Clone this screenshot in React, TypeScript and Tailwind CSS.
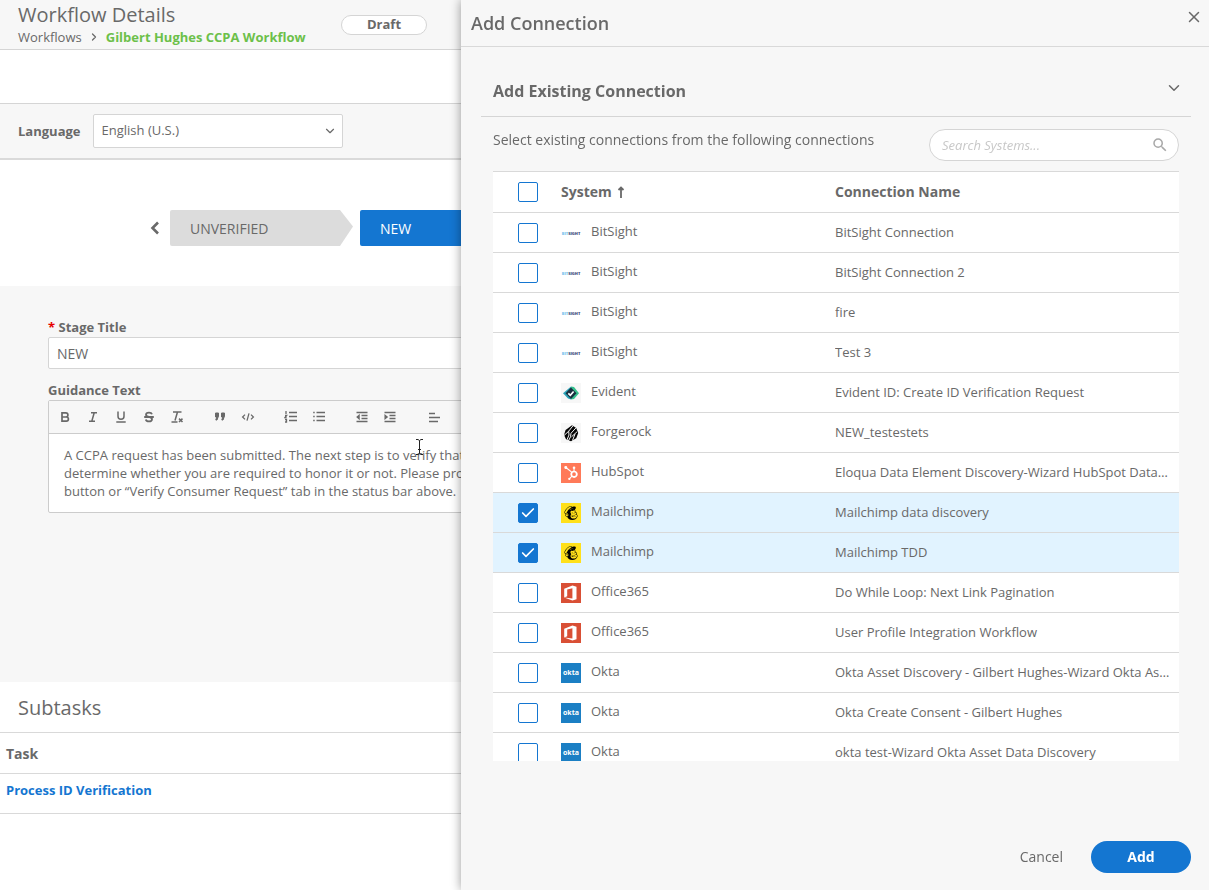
import { useState } from 'react';
import type { ReactNode } from 'react';
import { ChevronDown, ChevronRight, X, Check } from 'lucide-react';
import { SiHubspot, SiMailchimp } from 'react-icons/si';
import { MdSearch } from 'react-icons/md';

type System = 'BitSight' | 'Evident' | 'Forgerock' | 'HubSpot' | 'Mailchimp' | 'Office365' | 'Okta';

const connections: { system: System; name: string }[] = [
  { system: 'BitSight', name: 'BitSight Connection' },
  { system: 'BitSight', name: 'BitSight Connection 2' },
  { system: 'BitSight', name: 'fire' },
  { system: 'BitSight', name: 'Test 3' },
  { system: 'Evident', name: 'Evident ID: Create ID Verification Request' },
  { system: 'Forgerock', name: 'NEW_testestets' },
  { system: 'HubSpot', name: 'Eloqua Data Element Discovery-Wizard HubSpot Database' },
  { system: 'Mailchimp', name: 'Mailchimp data discovery' },
  { system: 'Mailchimp', name: 'Mailchimp TDD' },
  { system: 'Office365', name: 'Do While Loop: Next Link Pagination' },
  { system: 'Office365', name: 'User Profile Integration Workflow' },
  { system: 'Okta', name: 'Okta Asset Discovery - Gilbert Hughes-Wizard Okta Asset Data' },
  { system: 'Okta', name: 'Okta Create Consent - Gilbert Hughes' },
  { system: 'Okta', name: 'okta test-Wizard Okta Asset Data Discovery' },
];

const logos: Record<System, ReactNode> = {
  BitSight: (
    <svg viewBox="0 0 20 20" className="size-5 overflow-visible" fontFamily="Open Sans, sans-serif" fontWeight="800" fontSize="5">
      <text x="10" y="12" fill="#3b4a78" fontSize="4" textAnchor="middle">
        <tspan fill="#7cc4ee">BIT</tspan>SIGHT
      </text>
    </svg>
  ),
  Evident: (
    <svg viewBox="0 0 20 20" className="size-5 bg-[#f7f7f7]">
      <path d="M10 3.500 2 10.300 7 15.500l3 1z" fill="#2aa3b8" />
      <path d="M10 3.500l3 .5 5 6.300-5 5.700-3 .5z" fill="#35c08d" />
      <path d="M10 4.500l5.500 5.800L10 16l-5.500-5.700z" fill="#18303f" />
      <path d="M7.300 10.300l2 1.900 3.300-3.700" fill="none" stroke="#fff" strokeWidth="1.700" />
    </svg>
  ),
  Forgerock: (
    <svg viewBox="0 0 20 20" className="size-5 bg-[#f7f7f7]">
      <path d="M11 2.300 4.600 7 3 12l2.200 4.500L10 18.300l5.200-3L17.200 10l-2-5z" fill="#050505" />
      <path d="M12.200 2.500 7.700 8.200 3 12.500M7.700 8.200 8 12l-2.300 5.500M15.300 4.500 10 10.300l-.5 3.500-2.300 4.500M10.500 13.800l5.500-5M14 11l-2.500 6.500" fill="none" stroke="#f7f7f7" strokeWidth="1" />
    </svg>
  ),
  HubSpot: (
    <span className="grid size-5 place-items-center bg-[#ff7a59]">
      <SiHubspot className="size-3.5 text-white" />
    </span>
  ),
  Mailchimp: (
    <span className="grid size-5 place-items-center bg-[#ffe01b]">
      <SiMailchimp className="size-3.5 text-black" />
    </span>
  ),
  Office365: (
    <svg viewBox="0 0 20 20" className="size-5 bg-[#d94f35]">
      <path d="M3.200 5.800 11.400 2.500 15.500 3.800v12.400L11.400 17.600 3.200 14.600l8.200 1V5.200L6.200 6.500v6.700l-3 1.400z" fill="#fff" />
    </svg>
  ),
  Okta: (
    <svg viewBox="0 0 20 20" className="size-5 bg-[#1b7fc4]">
      <text x="10" y="12" fill="#fff" fontFamily="Open Sans, sans-serif" fontWeight="700" fontSize="7" textAnchor="middle">okta</text>
    </svg>
  ),
};

const toolGroups: { label: string; icon: ReactNode }[][] = [
  [
    { label: 'Bold', icon: <path d="M4 2.800h3.800a2.100 2.100 0 010 4.200H4zm0 4.200h4.300a2.100 2.100 0 010 4.200H4z" strokeWidth="1.700" /> },
    { label: 'Italic', icon: <path d="M5 2.700h6M3 11.300h6M8.200 2.700 5.800 11.300" /> },
    { label: 'Underline', icon: <path d="M4 1.500v4.700a3 3 0 006 0V1.500M2.300 12h9.400" /> },
    { label: 'Strike', icon: <path d="M10 4.300C9.600 3.100 8.500 2.600 7 2.600c-1.800 0-3 .8-3 2.100 0 3 6 1.500 6 4.500 0 1.400-1.300 2.200-3 2.200-1.600 0-2.800-.6-3.200-2M2.200 7h9.600" strokeWidth="1.800" /> },
    { label: 'Clear formatting', icon: <path d="M3 2h8.500M7.500 2 5 10.500M1.500 12h6M9 8.600l3.500 3.400M12.500 8.600 9 12" /> },
  ],
  [
    { label: 'Quote', icon: <path d="M2.500 3h3v3L4 10H2.800l1-3H2.500zM8.500 3h3v3L10 10H8.800l1-3H8.500z" fill="currentColor" strokeWidth="1" /> },
    { label: 'Code', icon: <path d="M4 4.600 1.600 7 4 9.400M10 4.600 12.400 7 10 9.400M8 3.300 6 10.700" strokeWidth="1.300" /> },
  ],
  [
    { label: 'Numbered list', icon: <path d="M5 2.500h8M5 6.500h8M5 10.500h8M2 1v3M1 5.500h1.600L1 7.500h1.600M1 9.500h1.500V12H1" strokeWidth="1.300" /> },
    { label: 'Bulleted list', icon: <path d="M4.500 2.500H13M4.500 6.500H13M4.500 10.500H13M1.200 2.500h1.500M1.200 6.500h1.500M1.200 10.500h1.500" /> },
  ],
  [
    { label: 'Outdent', icon: <path d="M1.500 2.500h11M6.500 5.500h6M6.500 8.500h6M1.500 11.500h11M4 5.500 2.300 7 4 8.500z" /> },
    { label: 'Indent', icon: <path d="M1.500 2.500h11M6.500 5.500h6M6.500 8.500h6M1.500 11.500h11M2.200 5.500 4 7 2.200 8.500z" /> },
  ],
  [{ label: 'Align', icon: <path d="M3 3.500h6M3 7.500h11M3 11.500h9" /> }],
];

function Checkbox({ label, checked, onChange }: { label: string; checked: boolean; onChange: () => void }) {
  return (
    <label className="grid size-5 place-items-center">
      <input
        type="checkbox"
        aria-label={label}
        checked={checked}
        onChange={onChange}
        className="peer col-start-1 row-start-1 size-5 appearance-none rounded-xs border border-[#1476d1] bg-white checked:bg-[#1476d1]"
      />
      <Check className="pointer-events-none col-start-1 row-start-1 hidden size-4 text-white peer-checked:block" strokeWidth={2.5} />
    </label>
  );
}

function WorkflowPage() {
  return (
    <div className="min-h-screen">
      <header className="flex h-[50px] items-center border-b border-[#d5d5d5] bg-[#f7f7f7] pl-[18px]">
        <div className="w-[323px]">
          <h1 className="text-xl leading-6">Workflow Details</h1>
          <nav className="flex items-center gap-1.5 leading-5">
            <a href="#workflows">Workflows</a>
            <ChevronRight className="size-3" strokeWidth={2.5} />
            <a href="#workflow" className="font-bold text-[#6cc04a]">Gilbert Hughes CCPA Workflow</a>
          </nav>
        </div>
        <span className="flex h-5 w-[86px] items-center justify-center rounded-full border border-[#d5d5d5] bg-white font-bold">Draft</span>
      </header>

      <div className="h-[54px] border-b border-[#d5d5d5]" />

      <div className="flex h-14 items-center gap-3 border-b-2 border-[#dadada] bg-[#f7f7f7] pl-[18px]">
        <label htmlFor="language" className="pt-0.5 font-bold">Language</label>
        <div className="relative w-[250px]">
          <select id="language" className="h-[34px] w-full appearance-none rounded-xs border border-[#d5d5d5] bg-white px-2">
            <option>English (U.S.)</option>
          </select>
          <ChevronDown className="pointer-events-none absolute top-2.5 right-1.5 size-3.5" />
        </div>
      </div>

      <div className="flex h-[126px] items-center pt-2.5 pl-[149px] text-sm">
        <button aria-label="Previous stage" className="w-[21px]">
          <svg viewBox="0 0 12 14" className="h-3.5 w-3" fill="none" stroke="currentColor" strokeWidth="2.600">
            <path d="M9 1.500 3.500 7 9 12.500" />
          </svg>
        </button>
        <button className="mr-[7px] h-9 w-[183px] rounded-xs bg-[#dcdcdc] pt-0.5 pl-5 text-left [clip-path:polygon(0_0,170px_0,100%_46%,170px_100%,0_100%)]">
          UNVERIFIED
        </button>
        <button className="h-9 w-[183px] rounded-xs bg-[#1476d1] pt-0.5 pl-5 text-left text-white">NEW</button>
      </div>

      <section className="h-[396px] bg-[#f7f7f7] px-12 pt-8">
        <label htmlFor="stage-title" className="block leading-[19px] font-bold">
          <span className="text-[#e60000]">*</span> Stage Title
        </label>
        <input id="stage-title" defaultValue="NEW" className="mb-3 h-8 w-full rounded-xs border border-[#d5d5d5] bg-white px-2 text-sm" />
        <h2 className="leading-[19px] font-bold">Guidance Text</h2>
        <div className="rounded-xs border border-[#cccccc] bg-white">
          <div className="flex h-8 items-center gap-[15px] bg-[#f7f7f7] pl-0.5">
            {toolGroups.map((group, i) => (
              <div key={i} className="flex">
                {group.map((tool) => (
                  <button key={tool.label} aria-label={tool.label} className="grid h-6 w-7 place-items-center">
                    <svg viewBox="0 0 14 14" className="size-3.5" fill="none" stroke="currentColor" strokeWidth="1.500">
                      {tool.icon}
                    </svg>
                  </button>
                ))}
              </div>
            ))}
          </div>
          <div className="h-[79px] overflow-hidden border-t border-[#cccccc] px-[15px] pt-3 leading-[18px] whitespace-nowrap">
            <p>A CCPA request has been submitted. The next step is to verify that</p>
            <p>determine whether you are required to honor it or not. Please proceed</p>
            <p>button or “Verify Consumer Request” tab in the status bar above.</p>
          </div>
        </div>
      </section>

      <h2 className="flex h-[50px] items-center pt-0.5 pl-[18px] text-xl">Subtasks</h2>
      <table className="w-full border-separate border-spacing-0 text-left">
        <thead>
          <tr>
            <th className="h-[42px] border-y border-[#d9d9d9] pt-0.5 pl-1.5 text-sm font-bold">Task</th>
          </tr>
        </thead>
        <tbody>
          <tr>
            <td className="h-10 border-b border-[#d9d9d9] pb-1.5 pl-1.5">
              <a href="#task" className="font-bold text-[#1476d1]">Process ID Verification</a>
            </td>
          </tr>
        </tbody>
      </table>

      {/* text cursor */}
      <svg viewBox="0 0 8 16" className="absolute top-[439px] left-[415px] h-4 w-2" fill="none" stroke="#222">
        <path d="M1 .5h2l1.500 1 1.500-1h2M4.500 1.500v13M1 15.500h2l1.500-1 1.500 1h2M3 10.500h3" />
      </svg>
    </div>
  );
}

function AddConnectionDrawer() {
  const [selected, setSelected] = useState<number[]>([7, 8]);

  const toggle = (index: number) =>
    setSelected((prev) => (prev.includes(index) ? prev.filter((i) => i !== index) : [...prev, index]));

  const allSelected = selected.length === connections.length;

  return (
    <aside className="fixed inset-y-0 right-0 flex w-[748px] max-w-full flex-col bg-[#f7f7f7] shadow-[0_0_10px_rgba(0,0,0,0.4)]">
      <header className="flex h-[47px] shrink-0 justify-between border-b border-[#d9d9d9] pl-2.5">
        <h2 className="text-lg leading-[47px] font-semibold">Add Connection</h2>
        <button aria-label="Close" className="size-[31px] pt-0.5">
          <X className="mx-auto size-[18px]" />
        </button>
      </header>

      <div className="mr-[18px] ml-5 flex h-[70px] shrink-0 items-center justify-between border-b border-[#d5d5d5] pt-[18px] pr-2 pl-3">
        <h3 className="text-base font-bold">Add Existing Connection</h3>
        <button aria-label="Collapse section" className="pb-1.5">
          <ChevronDown className="size-[18px]" />
        </button>
      </div>

      <div className="mr-[30px] ml-8 flex h-[54px] shrink-0 justify-between pt-3">
        <p className="text-sm leading-[22px]">Select existing connections from the following connections</p>
        <div className="relative h-8 w-[250px]">
          <input
            aria-label="Search Systems"
            placeholder="Search Systems..."
            className="h-8 w-full rounded-full border border-[#d5d5d5] bg-white pr-9 pl-3 placeholder:text-[#c8c8c8] placeholder:italic"
          />
          <MdSearch className="absolute top-[7px] right-2.5 size-[18px] text-[#a8a8a8]" />
        </div>
      </div>

      <div className="mr-[30px] ml-8 min-h-0 flex-1 overflow-y-auto [scrollbar-width:none]">
        <table className="w-full table-fixed border-separate border-spacing-0 bg-white text-left">
          <colgroup>
            <col className="w-[68px]" />
            <col className="w-[274px]" />
            <col />
          </colgroup>
          <thead className="text-sm">
            <tr>
              <th className="h-[42px] border-y border-[#d9d9d9] pl-[25px]">
                <Checkbox
                  label="Select all"
                  checked={allSelected}
                  onChange={() => setSelected(allSelected ? [] : connections.map((_, i) => i))}
                />
              </th>
              <th className="border-y border-[#d9d9d9] font-bold">
                <span className="flex items-center gap-[5px]">
                  System
                  <svg viewBox="0 0 8 12" className="h-3 w-2" fill="none" stroke="currentColor" strokeWidth="1.800">
                    <path d="M4 12V2M1.500 4 4 1.500 6.500 4" />
                  </svg>
                </span>
              </th>
              <th className="border-y border-[#d9d9d9] font-bold">Connection Name</th>
            </tr>
          </thead>
          <tbody>
            {connections.map(({ system, name }, i) => (
              <tr key={i} className={selected.includes(i) ? 'bg-[#e1f3ff]' : 'bg-white'}>
                <td className="h-10 border-b border-[#d9d9d9] pl-[25px]">
                  <Checkbox label={`Select ${name}`} checked={selected.includes(i)} onChange={() => toggle(i)} />
                </td>
                <td className="border-b border-[#d9d9d9]">
                  <div className="flex h-5 gap-2.5">
                    {logos[system]}
                    <span className="leading-4">{system}</span>
                  </div>
                </td>
                <td className="truncate border-b border-[#d9d9d9] pr-2">{name}</td>
              </tr>
            ))}
          </tbody>
        </table>
      </div>

      <footer className="flex shrink-0 items-center justify-end gap-7 pt-20 pr-[18px] pb-[17px] text-sm">
        <button>Cancel</button>
        <button className="h-8 w-[100px] rounded-full bg-[#1476d1] font-bold text-white">Add</button>
      </footer>
    </aside>
  );
}

export default function App() {
  return (
    <main className="relative min-h-screen overflow-hidden bg-white font-['Open_Sans',sans-serif] text-[13px] text-[#696969]">
      <WorkflowPage />
      <AddConnectionDrawer />
    </main>
  );
}
